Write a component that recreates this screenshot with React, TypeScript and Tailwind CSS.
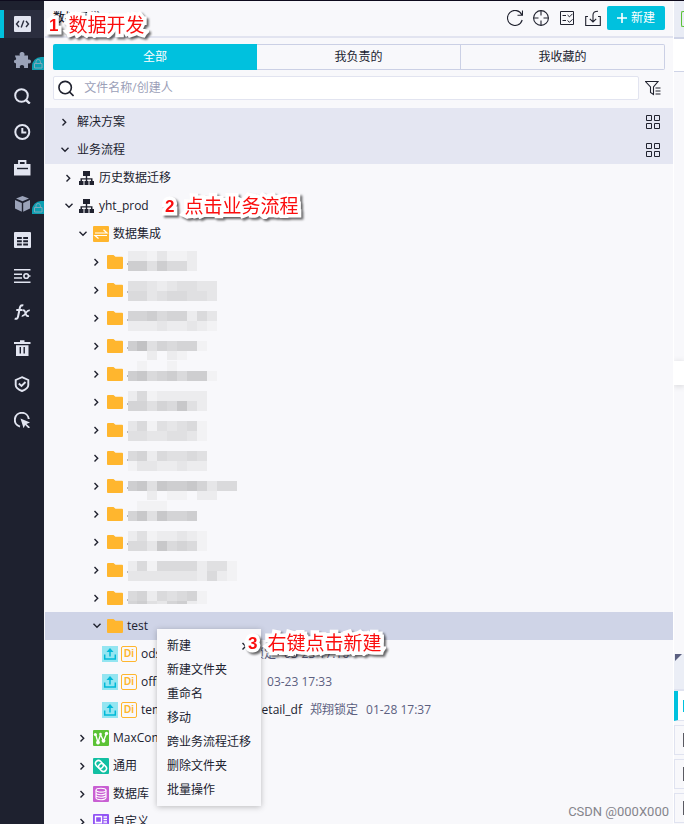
import { ReactNode } from "react";
import clsx from "clsx";

const MOSAIC_ROWS = [
  ["2213112", "7747552"],
  ["443234433", "553455443"],
  ["667566253", "222322321"],
  ["79465661", "00202100"],
  ["010010000", "785675771"],
  ["25122222", "66465842"],
  ["35143451", "44334431"],
  ["56254454", "13322322"],
  ["78487786355", "00201102200"],
  ["0111000", "6848667"],
  ["24122321", "55385651"],
  ["25155552441", "33333332521"],
  ["56254561", "67436721"],
];

const MENU_ITEMS = [
  "新建",
  "新建文件夹",
  "重命名",
  "移动",
  "跨业务流程迁移",
  "删除文件夹",
  "批量操作",
];

const Chevron = ({ open = false }: { open?: boolean }) => (
  <svg viewBox="0 0 8 8" className="size-2 shrink-0" fill="none" stroke="#20222f" strokeWidth="1.4">
    {open ? <path d="M0.5 1.800 4 5.200 7.500 1.800" /> : <path d="M1.500 1 4.700 4.200 1.500 7.400" />}
  </svg>
);

const FolderIcon = () => (
  <svg viewBox="0 0 16 16" className="size-4 shrink-0">
    <path d="M1 1h5.500l2 1.800H15a1 1 0 0 1 1 1V14a1 1 0 0 1-1 1H1a1 1 0 0 1-1-1V2a1 1 0 0 1 1-1z" fill="#ffb62e" />
  </svg>
);

const FlowIcon = () => (
  <svg viewBox="0 0 16 16" className="size-4 shrink-0" fill="#20222f">
    <path d="M4 1h7v5H8.200v2.200H13.500V11H15v4h-4.500v-4H12V9.500H8.200V11H9.500v4H5.500v-4h1.300V9.500H3V11h1.500v4H0v-4h1.500V8.200h5.300V6H4z" />
  </svg>
);

const IntegrationIcon = () => (
  <svg viewBox="0 0 16 16" className="size-4 shrink-0">
    <rect width="16" height="16" rx="1" fill="#ffb62e" />
    <path d="M2 7h12L10.500 3.800M14 9.500H2l3.500 3" fill="none" stroke="#fff" strokeWidth="1.200" />
  </svg>
);

const MaxComputeIcon = () => (
  <svg viewBox="0 0 16 16" className="size-4 shrink-0">
    <rect width="16" height="16" rx="1" fill="#5bc236" />
    <path d="M2.500 4 5 12.500 7.500 4.500 10.500 11 13.500 3.500" fill="none" stroke="#fff" strokeWidth="1.300" />
    <g fill="#fff">
      <circle cx="2.300" cy="4.500" r="1.500" />
      <circle cx="5" cy="12.500" r="1.900" />
      <circle cx="7.500" cy="4" r="1.300" />
      <circle cx="10.500" cy="10.800" r="1.900" />
      <circle cx="13.500" cy="3.500" r="1.700" />
    </g>
  </svg>
);

const GeneralIcon = () => (
  <svg viewBox="0 0 16 16" className="size-4 shrink-0">
    <rect width="16" height="16" rx="1" fill="#12bfa2" />
    <g fill="none" stroke="#fff" strokeWidth="1.500" transform="rotate(45 8 8)">
      <rect x="1.500" y="5" width="8.500" height="6" rx="3" />
      <rect x="6" y="5" width="8.500" height="6" rx="3" />
    </g>
  </svg>
);

const DatabaseIcon = () => (
  <svg viewBox="0 0 16 16" className="size-4 shrink-0">
    <rect width="16" height="16" rx="1" fill="#c95fd3" />
    <g fill="none" stroke="#fff" strokeWidth="1.100">
      <ellipse cx="8" cy="4.200" rx="5" ry="1.900" />
      <path d="M3 4.200v7.600c0 1 2.200 1.900 5 1.900s5-.9 5-1.900V4.200M3 6.800c0 1 2.200 1.900 5 1.900s5-.9 5-1.900M3 9.300c0 1 2.200 1.900 5 1.900s5-.9 5-1.900" />
    </g>
  </svg>
);

const CustomIcon = () => (
  <svg viewBox="0 0 16 16" className="size-4 shrink-0">
    <rect width="16" height="16" rx="1" fill="#9254f5" />
    <path d="M2.500 2.500h6v6h-6zM10.500 3h3.500M10.500 5.500h3.500M10.500 8h3.500M2.500 10.500h6v3h-6zM10.500 10.500H14v3h-3.500z" fill="none" stroke="#fff" strokeWidth="1.300" />
  </svg>
);

const UploadIcon = () => (
  <svg viewBox="0 0 16 16" className="size-4 shrink-0">
    <rect width="16" height="16" fill="#94e5f1" />
    <path d="M2.700 8.500v4.500h10.600V8.500M8 10.500V4" fill="none" stroke="#00b9d8" strokeWidth="1.500" />
    <path d="M8 2 11.500 6h-7z" fill="#00b9d8" />
  </svg>
);

const GridIcon = () => (
  <svg viewBox="0 0 16 16" className="size-4 shrink-0" fill="none" stroke="#20222f">
    <path d="M1.500 1.500h5v5h-5zM9.500 1.500h5v5h-5zM1.500 9.500h5v5h-5zM9.500 9.500h5v5h-5z" />
  </svg>
);

const LockBadge = () => (
  <svg viewBox="0 0 12 13" className="absolute right-0 bottom-1 h-[13px] w-3">
    <path d="M0 13V9a9 9 0 0 1 9-9h3v13z" fill="#0d9fb2" />
    <path d="M2.500 6.500h7.500v4.500H2.500zM4 6.500V4.700a2.200 2.200 0 0 1 4.400 0v1.800" fill="none" stroke="#7fa9ba" />
  </svg>
);

const Mosaic = ({ index }: { index: number }) => {
  const lines = MOSAIC_ROWS[index];
  const top = (3 + index * 2) % 10;
  const height = index === MOSAIC_ROWS.length - 1 ? 20 : 28;
  return (
    <svg width={lines[0].length * 10} height={height} className="shrink-0 self-start overflow-hidden" shapeRendering="crispEdges">
      <rect x="0" y="15" width="1" height="2" fill="#b4b4b8" />
      {lines.map((line, row) =>
        line.split("").map((level, col) => {
          const shade = 248 - Number(level) * 6;
          return level === "0" ? null : (
            <rect
              key={`${row}-${col}`}
              x={col === 0 ? 1 : col * 10}
              y={top + row * 10}
              width={col === 0 ? 9 : 10}
              height="10"
              fill={`rgb(${shade},${shade},${shade + 2})`}
            />
          );
        })
      )}
    </svg>
  );
};

const sideIcons: { label: string; icon: ReactNode; dim?: boolean }[] = [
  {
    label: "数据开发",
    icon: (
      <>
        <rect width="17" height="16" rx="1" fill="#e2e5f1" />
        <path d="M5 5 2.500 8 5 11M12 5l2.500 3-2.500 3M9.800 4.500 7.200 11.500" fill="none" stroke="#2b2e3f" strokeWidth="1.400" />
      </>
    ),
  },
  {
    label: "组件管理",
    dim: true,
    icon: <path d="M1 3.500h5C4.800 1.500 6.500 0 8 0s3.400 1.500 2.200 3.500H14v4.300c1.500-.8 3 .2 3 1.700s-1.500 2.500-3 1.700V16H10c.8-1.800-.6-3-2-3s-2.800 1.200-2 3H2v-4.800c-1.200.3-2-.6-2-1.700s.8-2 2-1.700C2.800 6 1 5.500 1 3.500z" fill="#9ba3b9" />,
  },
  {
    label: "查询",
    icon: (
      <g fill="none" stroke="#e2e5f1" strokeWidth="2">
        <circle cx="7.500" cy="7.500" r="6.300" />
        <path d="m11.800 11.800 4 3.800" strokeWidth="2.400" />
      </g>
    ),
  },
  {
    label: "运行历史",
    icon: (
      <g fill="none" stroke="#e2e5f1" strokeWidth="2">
        <circle cx="8.300" cy="8" r="7" />
        <path d="M8.300 4v4.500h4" />
      </g>
    ),
  },
  {
    label: "工具箱",
    icon: (
      <>
        <path d="M0 4h16.500v11.500H0z" fill="#e2e5f1" />
        <path d="M5 4V1h6.500v3" fill="none" stroke="#e2e5f1" strokeWidth="1.800" />
        <path d="M3 8.500h11" stroke="#1e212f" strokeWidth="1.400" />
      </>
    ),
  },
  {
    label: "公共表",
    dim: true,
    icon: <path d="m8.500 0 6.500 2.500-6.500 2.700L2 2.500zM1 4l6.800 3v8.800L1 12.500zM16 4 9.200 7v8.800l6.800-3.300z" fill="#9ba3b9" />,
  },
  {
    label: "表管理",
    icon: (
      <>
        <rect width="17" height="16" rx="1" fill="#e2e5f1" />
        <path d="M3 5h4.800v2H3zM9.200 5H14v2H9.200zM3 8.300h4.800v2H3zM9.200 8.300H14v2H9.200zM3 11.600h4.800v1.800H3zM9.200 11.600H14v1.800H9.200z" fill="#1e212f" />
      </>
    ),
  },
  {
    label: "任务列表",
    icon: (
      <g fill="none" stroke="#e2e5f1" strokeWidth="1.600">
        <path d="M0 1.800h16.500M0 6.300h8M0 10h8M0 14.300h16.500M15 8h1.500" />
        <circle cx="12.200" cy="8" r="2.300" />
      </g>
    ),
  },
  {
    label: "函数",
    icon: (
      <g fill="none" stroke="#e2e5f1" strokeWidth="2">
        <path d="M9.300 1.500c-2-.8-3 .2-3.500 2.500L4 12.800c-.4 1.800-1.500 2.500-3.300 1.800M2.300 6h6" />
        <path d="M8.500 6.600c1.600-.8 2.200-.2 2.800 1.800.7 2.500 1.300 4.200 3.500 3.400M15.800 6.500c-1.500-.5-2.500.4-4 2.500s-2.500 3.500-4 2.800" strokeWidth="1.800" />
      </g>
    ),
  },
  {
    label: "回收站",
    icon: (
      <>
        <path d="M0 2h6V.3h4.500V2h6v2H0zM2 5.200h12.500V16H2z" fill="#e2e5f1" />
        <path d="M6.300 7v6.500M10.200 7v6.500" stroke="#1e212f" strokeWidth="1.400" />
      </>
    ),
  },
  {
    label: "安全",
    icon: (
      <g fill="none" stroke="#e2e5f1" strokeWidth="1.900">
        <path d="M8 1.200 14.300 4v5c0 2.500-3 4.700-6.300 6-3.300-1.300-6.300-3.500-6.300-6V4z" />
        <path d="m4.800 7.500 2.700 2.500 4-4" />
      </g>
    ),
  },
  {
    label: "快捷操作",
    icon: (
      <>
        <path d="M6 14.600A7 7 0 1 1 14.800 7" fill="none" stroke="#e2e5f1" strokeWidth="2" />
        <path d="m6.500 6.500 9.500 4-3.600 1.400 3.600 3.300-1.400 1.300-3.500-3.500-1.500 3.300z" fill="#e2e5f1" />
      </>
    ),
  },
];

const Sidebar = () => (
  <nav className="flex w-11 shrink-0 flex-col gap-2 bg-[#1e212f] pt-[9px]">
    {sideIcons.map(({ label, icon, dim }, i) => (
      <button
        key={label}
        aria-label={label}
        className={clsx(
          "relative flex h-7 shrink-0 items-center justify-center",
          i === 0 && "border-l-4 border-[#00c1de] bg-[#2b2e3f] pr-1"
        )}
      >
        <svg viewBox="0 0 17 16" className="h-4 w-[17px]">{icon}</svg>
        {dim && <LockBadge />}
      </button>
    ))}
  </nav>
);

const Toolbar = () => (
  <header className="flex h-[37px] shrink-0 items-start justify-between border-b-2 border-[#e2e4f0] px-2 pt-[5px]">
    <h1 className="pt-1 text-xs font-medium">数据开发</h1>
    <div className="flex items-center gap-2.5">
      <button aria-label="刷新">
        <svg viewBox="0 0 16 16" className="size-4" fill="none" stroke="#20222f">
          <path d="M14.800 4.800A7.500 7.500 0 1 0 15.200 10M15.500.5v4.800h-5" strokeWidth="1.100" />
        </svg>
      </button>
      <button aria-label="定位">
        <svg viewBox="0 0 16 16" className="size-4" fill="none" stroke="#20222f">
          <circle cx="8" cy="8" r="7.400" strokeWidth="1.100" />
          <path d="M8 .5v5M8 10.500v5M.5 8h5M10.500 8h5" strokeWidth="1.100" />
        </svg>
      </button>
      <button aria-label="批量">
        <svg viewBox="0 0 16 16" className="size-4" fill="none" stroke="#20222f">
          <path d="M1.500 1.500h13v13h-13zM3.500 5.500H7M3.500 10.500H7M8.500 5l2 1.800 3-3M8.500 10.500l2 1.800 3-3" />
        </svg>
      </button>
      <button aria-label="导入">
        <svg viewBox="0 0 16 16" className="size-4" fill="none" stroke="#20222f">
          <path d="M3 6.500H.7v9h14.600v-9H13M8 12V5C8 2.500 9.500 1.200 13 1.200M4.800 8.800 8 12l3.200-3.200" strokeWidth="1.100" />
        </svg>
      </button>
      <button className="-ml-1 flex h-6 items-center gap-1 rounded-xs bg-[#00c1de] px-2.5 text-xs text-white">
        <svg viewBox="0 0 10 10" className="size-2.5" stroke="#fff" strokeWidth="1.600">
          <path d="M5 0v10M0 5h10" />
        </svg>
        新建
      </button>
    </div>
  </header>
);

const Filters = () => (
  <>
    <div className="mx-2 mt-1.5 grid h-[26px] shrink-0 grid-cols-3 text-xs">
      <button className="rounded-l-xs bg-[#00c1de] text-white">全部</button>
      <button className="border-y border-r border-[#cbd0e5]">我负责的</button>
      <button className="rounded-r-xs border-y border-r border-[#cbd0e5]">我收藏的</button>
    </div>
    <div className="mt-1.5 mb-2 flex h-6 shrink-0 items-center gap-1.5 pr-3 pl-2">
      <label className="flex h-full flex-1 items-center gap-2.5 rounded-xs border border-[#e2e4f0] bg-white pl-1">
        <svg viewBox="0 0 17 17" className="size-[17px]" fill="none" stroke="#20222f" strokeWidth="1.700">
          <circle cx="7.500" cy="7.500" r="6.500" />
          <path d="m12 12 4.300 4.300" />
        </svg>
        <input
          aria-label="搜索"
          placeholder="文件名称/创建人"
          className="w-full text-xs outline-none placeholder:text-[#9ba0b8]"
        />
      </label>
      <button aria-label="筛选">
        <svg viewBox="0 0 16 16" className="size-4" fill="none" stroke="#20222f">
          <path d="M.5 1.500H13L8.500 7v7.500L5.500 12.500V7zM10.500 8h5M10.500 11h5M10.500 14h5" strokeWidth="1.100" />
        </svg>
      </button>
    </div>
  </>
);

const Section = ({ title, open }: { title: string; open?: boolean }) => (
  <div className="flex h-7 shrink-0 items-center justify-between bg-[#e4e6f2] pr-3 pl-4">
    <button className="flex items-center gap-2">
      <Chevron open={open} />
      {title}
    </button>
    <button aria-label={`${title}视图`}>
      <GridIcon />
    </button>
  </div>
);

const Node = ({
  className,
  icon,
  open,
  children,
}: {
  className: string;
  icon: ReactNode;
  open?: boolean;
  children: ReactNode;
}) => (
  <button className={clsx("flex h-7 w-full shrink-0 items-center text-left", className)}>
    <Chevron open={open} />
    <span className="mr-1 ml-1.5">{icon}</span>
    {children}
  </button>
);

const FileRow = ({ name, children }: { name: ReactNode; children: ReactNode }) => (
  <button className="flex h-7 w-full shrink-0 items-center pl-[57px] text-left whitespace-nowrap">
    <UploadIcon />
    <span className="mr-1 ml-[3px] flex size-4 items-center justify-center rounded-xs border border-[#ffb62e] font-[Liberation_Sans] text-[10px] font-bold text-[#ffb62e]">
      Di
    </span>
    {name}
    <span className="ml-2 flex gap-2 text-[#5c6080]">{children}</span>
  </button>
);

const ContextMenu = () => (
  <ul className="absolute top-[628px] left-28 w-[104px] bg-[#f8f8fb] pt-[5px] pb-1 whitespace-nowrap shadow-[0_1px_6px_rgba(0,0,0,0.25)]">
    {MENU_ITEMS.map((item, i) => (
      <li key={item}>
        <button className="flex h-6 w-full items-center justify-between pr-3 pl-2.5">
          {item}
          {i === 0 && <Chevron />}
        </button>
      </li>
    ))}
  </ul>
);

const Note = ({ step, className, children }: { step: number; className: string; children: string }) => (
  <p
    className={clsx(
      "absolute flex items-center gap-2.5 text-[19px] leading-6 whitespace-nowrap text-[#fb0d0d] drop-shadow-[2px_2px_1px_rgba(0,0,0,0.6)] [-webkit-text-stroke:7px_white] [paint-order:stroke_fill] [stroke-linejoin:round]",
      className
    )}
  >
    <span className="font-[Liberation_Sans] text-[17px] font-bold">{step}</span>
    <span className="font-['Liberation_Serif','Noto_Sans_CJK_SC',serif]">{children}</span>
  </p>
);

const EditorEdge = () => (
  <aside className="flex w-[10px] shrink-0 flex-col overflow-hidden bg-[#f8f8fb] pb-px">
    <div className="flex h-[38px] shrink-0 items-center justify-end border-b-2 border-[#cfd4e7] bg-[#e9ecf5]">
      <span className="h-4 w-[3px] rounded-l-xs border border-r-0 border-[#5bc236]" />
    </div>
    <div className="h-[33px] shrink-0 border-b border-[#cfd4e7] bg-white" />
    <div className="mt-[289px] h-6 shrink-0 bg-white shadow-[0_1px_6px_rgba(0,0,0,0.15)]" />
    <div className="mt-auto h-[37px] shrink-0 border-b-2 border-[#e0e3f0] bg-[#ebeef6]">
      <svg viewBox="0 0 8 8" className="ml-px size-2">
        <path d="M0 0h7L0 7z" fill="#5c6080" />
      </svg>
    </div>
    <div className="flex h-[30px] shrink-0 items-center justify-between border-b border-l-4 border-b-[#e0e3f0] border-l-[#00c1de] bg-white">
      <span className="ml-auto h-3 w-px bg-[#00c1de]" />
    </div>
    {[0, 1, 2].map((i) => (
      <div key={i} className="mt-1 flex h-[30px] shrink-0 items-center border border-r-0 border-[#e0e3f0]">
        <span className="ml-auto h-3.5 w-px bg-[#5a5a62]" />
      </div>
    ))}
  </aside>
);

const App = () => {
  return (
    <div className="flex h-screen overflow-hidden border-t border-[#0e0b1d] bg-[#f8f8fb] font-['Open_Sans','Noto_Sans_CJK_SC',sans-serif] text-xs text-[#20222f]">
      <Sidebar />
      <main className="relative ml-px flex min-w-0 flex-1 flex-col overflow-hidden">
        <Toolbar />
        <Filters />
        <Section title="解决方案" />
        <Section title="业务流程" open />
        <Node className="pl-5" icon={<FlowIcon />}>历史数据迁移</Node>
        <Node className="pl-5" icon={<FlowIcon />} open>yht_prod</Node>
        <Node className="pl-[34px]" icon={<IntegrationIcon />} open>数据集成</Node>
        {MOSAIC_ROWS.map((_, i) => (
          <Node key={i} className="pl-12" icon={<FolderIcon />}>
            <Mosaic index={i} />
          </Node>
        ))}
        <Node className="bg-[#cfd4e7] pl-12" icon={<FolderIcon />} open>test</Node>
        <FileRow name={<span className="w-[79px]">ods_table</span>}>
          <span>郑翔锁定</span>
          <span>03-23 17:16</span>
        </FileRow>
        <FileRow name={<span className="w-[62px]">offline_df</span>}>
          <span>郑翔锁定</span>
          <span>03-23 17:33</span>
        </FileRow>
        <FileRow
          name={
            <span className="flex w-[161px] justify-between">
              <span>tem</span>
              <span>detail_df</span>
            </span>
          }
        >
          <span>郑翔锁定</span>
          <span>01-28 17:37</span>
        </FileRow>
        <Node className="pl-[34px]" icon={<MaxComputeIcon />}>MaxCompute</Node>
        <Node className="pl-[34px]" icon={<GeneralIcon />}>通用</Node>
        <Node className="pl-[34px]" icon={<DatabaseIcon />}>数据库</Node>
        <Node className="pl-[34px]" icon={<CustomIcon />}>自定义</Node>
        <ContextMenu />
        <Note step={1} className="top-[13px] left-1">数据开发</Note>
        <Note step={2} className="top-[194px] left-[120px]">点击业务流程</Note>
        <Note step={3} className="top-[631px] left-[203px]">右键点击新建</Note>
        <p className="absolute right-1 bottom-1 font-[Roboto] text-[13px] text-[#85858c]">CSDN @000X000</p>
      </main>
      <div className="w-px shrink-0 bg-white" />
      <EditorEdge />
    </div>
  );
};

export default App;
